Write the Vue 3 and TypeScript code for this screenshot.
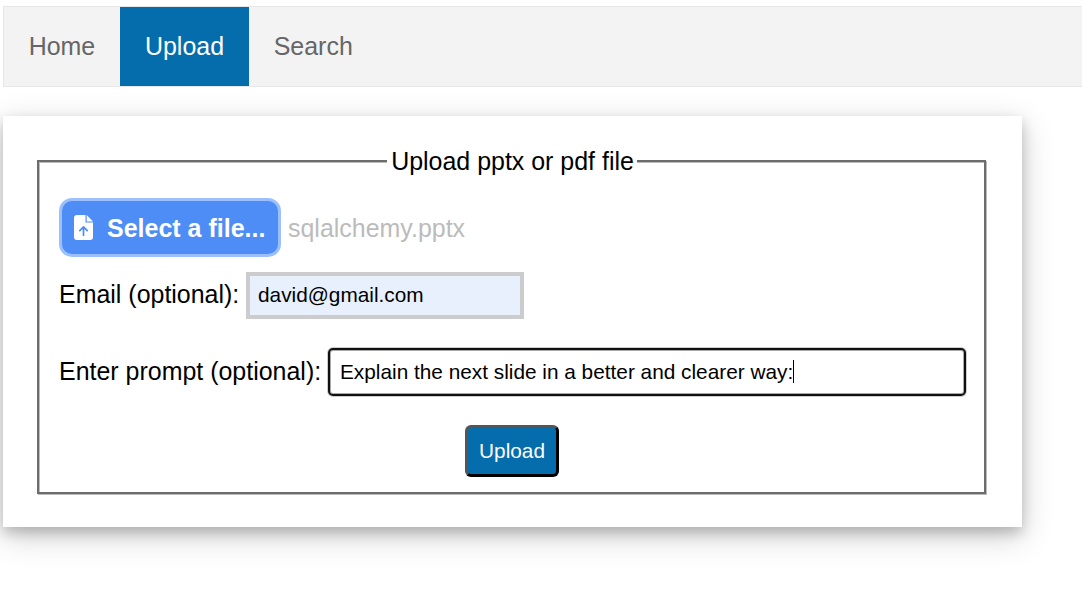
<script setup lang="ts">
import { ref } from 'vue'

const links: string[] = ['Home', 'Upload', 'Search']
const active = ref('Upload')
const fileName = ref('sqlalchemy.pptx')
const email = ref('david@gmail.com')
const prompt = ref('Explain the next slide in a better and clearer way:')
</script>

<template>
  <div class="page">
    <nav class="nav">
      <a v-for="link in links" :key="link" class="link" :class="{ active: link === active }" @click="active = link">{{ link }}</a>
    </nav>
    <main class="card">
      <section class="group">
        <h1 class="legend">Upload pptx or pdf file</h1>
        <div class="row file-row">
          <button class="select" type="button">
            <svg class="icon" viewBox="0 0 19 25" aria-hidden="true">
              <path fill="#fff" d="M3 0h8.500v7.500h7.500V22a3 3 0 0 1-3 3H3a3 3 0 0 1-3-3V3a3 3 0 0 1 3-3zM12.700 0L19 6.400h-6.300z" />
              <path fill="none" stroke="#4d8df5" stroke-width="1.700" stroke-linecap="round" stroke-linejoin="round" d="M9.500 20.300v-8M5.800 15.600l3.700-3.700 3.700 3.700" />
            </svg>
            <span class="select-text">Select a file...</span>
          </button>
          <span class="name">{{ fileName }}</span>
        </div>
        <div class="row email-row">
          <span class="label">Email (optional):</span>
          <div class="field email"><span>{{ email }}</span></div>
        </div>
        <div class="row prompt-row">
          <span class="label">Enter prompt (optional):</span>
          <div class="field prompt"><span>{{ prompt }}</span><i class="caret"></i></div>
        </div>
        <button class="submit" type="button">Upload</button>
      </section>
    </main>
  </div>
</template>

<style>
body {
  background: #fff;
}
</style>

<style scoped>
.page {
  box-sizing: border-box;
  height: 596px;
  padding: 6px 0 0 3px;
  overflow: hidden;
  font: 24.960px/29px "Liberation Sans", Arial, sans-serif;
  color: #000;
}
.nav {
  box-sizing: border-box;
  display: flex;
  height: 81px;
  border: 1px solid #e7e7e7;
  border-right: 0;
  background: #f3f3f3;
}
.link {
  padding: 25px 25px 25px 24.700px;
  color: #666;
}
.link.active {
  background: #056dab;
  color: #fff;
}
.card {
  box-sizing: border-box;
  width: 1019px;
  height: 411px;
  margin-top: 29px;
  padding: 44px 36px 33px 34px;
  background: #fff;
  box-shadow: 0 6px 12px rgba(0, 0, 0, 0.2), 0 9px 31px rgba(0, 0, 0, 0.19);
}
.group {
  box-sizing: border-box;
  display: flex;
  flex-direction: column;
  height: 334px;
  padding: 0 18px 0 20px;
  border: 2px solid #6c6c6c;
  box-shadow: inset 1px 1px #bbb, 1px 1px #bbb;
}
.legend {
  align-self: center;
  height: 29px;
  margin: -15px 0 0 -1px;
  padding: 0 3px 0 4px;
  background: #fff;
  font: inherit;
  white-space: nowrap;
}
.row {
  display: flex;
  align-items: center;
  white-space: nowrap;
}
.file-row {
  margin-top: 22px;
}
.select {
  box-sizing: border-box;
  display: flex;
  align-items: center;
  width: 222px;
  height: 59px;
  padding: 0 0 0 12px;
  border: 3px solid #9bc0fd;
  border-radius: 13px;
  background: #4d8df5;
  color: #fff;
  font: bold 25px/29px "Liberation Sans", Arial, sans-serif;
}
.icon {
  width: 19px;
  height: 25px;
  margin-right: 14px;
}
.select-text {
  padding-top: 2px;
}
.name {
  margin-left: 7px;
  padding-top: 2px;
  color: #bbb;
}
.email-row {
  margin-top: 15px;
}
.label {
  padding-bottom: 2px;
}
.email-row .label {
  width: 180px;
}
.prompt-row .label {
  width: 262px;
}
.field {
  box-sizing: border-box;
  display: flex;
  align-items: center;
  font-size: 20.800px;
}
.email {
  width: 278px;
  height: 47px;
  margin-left: 7px;
  padding: 0 0 2px 8px;
  border: 4px solid #ccc;
  background: #e8f0fe;
}
.prompt-row {
  margin-top: 29px;
}
.prompt {
  width: 638px;
  height: 48px;
  margin-left: 7px;
  padding: 0 0 1px 10px;
  border: 2px solid #101010;
  border-radius: 5px;
  background: #fff;
  box-shadow: inset 0 0 0 1px #aaa, 0 0 0 1px rgba(0, 0, 0, 0.2);
}
.caret {
  width: 1px;
  height: 23px;
  background: #000;
}
.submit {
  box-sizing: border-box;
  width: 94px;
  height: 52px;
  margin: 29px 0 0 406px;
  padding: 0;
  border: 3px solid;
  border-color: #555 #000 #000 #555;
  border-radius: 6px;
  background: #056dab;
  color: #fff;
  font: 20.800px/24px "Liberation Sans", Arial, sans-serif;
}
</style>
